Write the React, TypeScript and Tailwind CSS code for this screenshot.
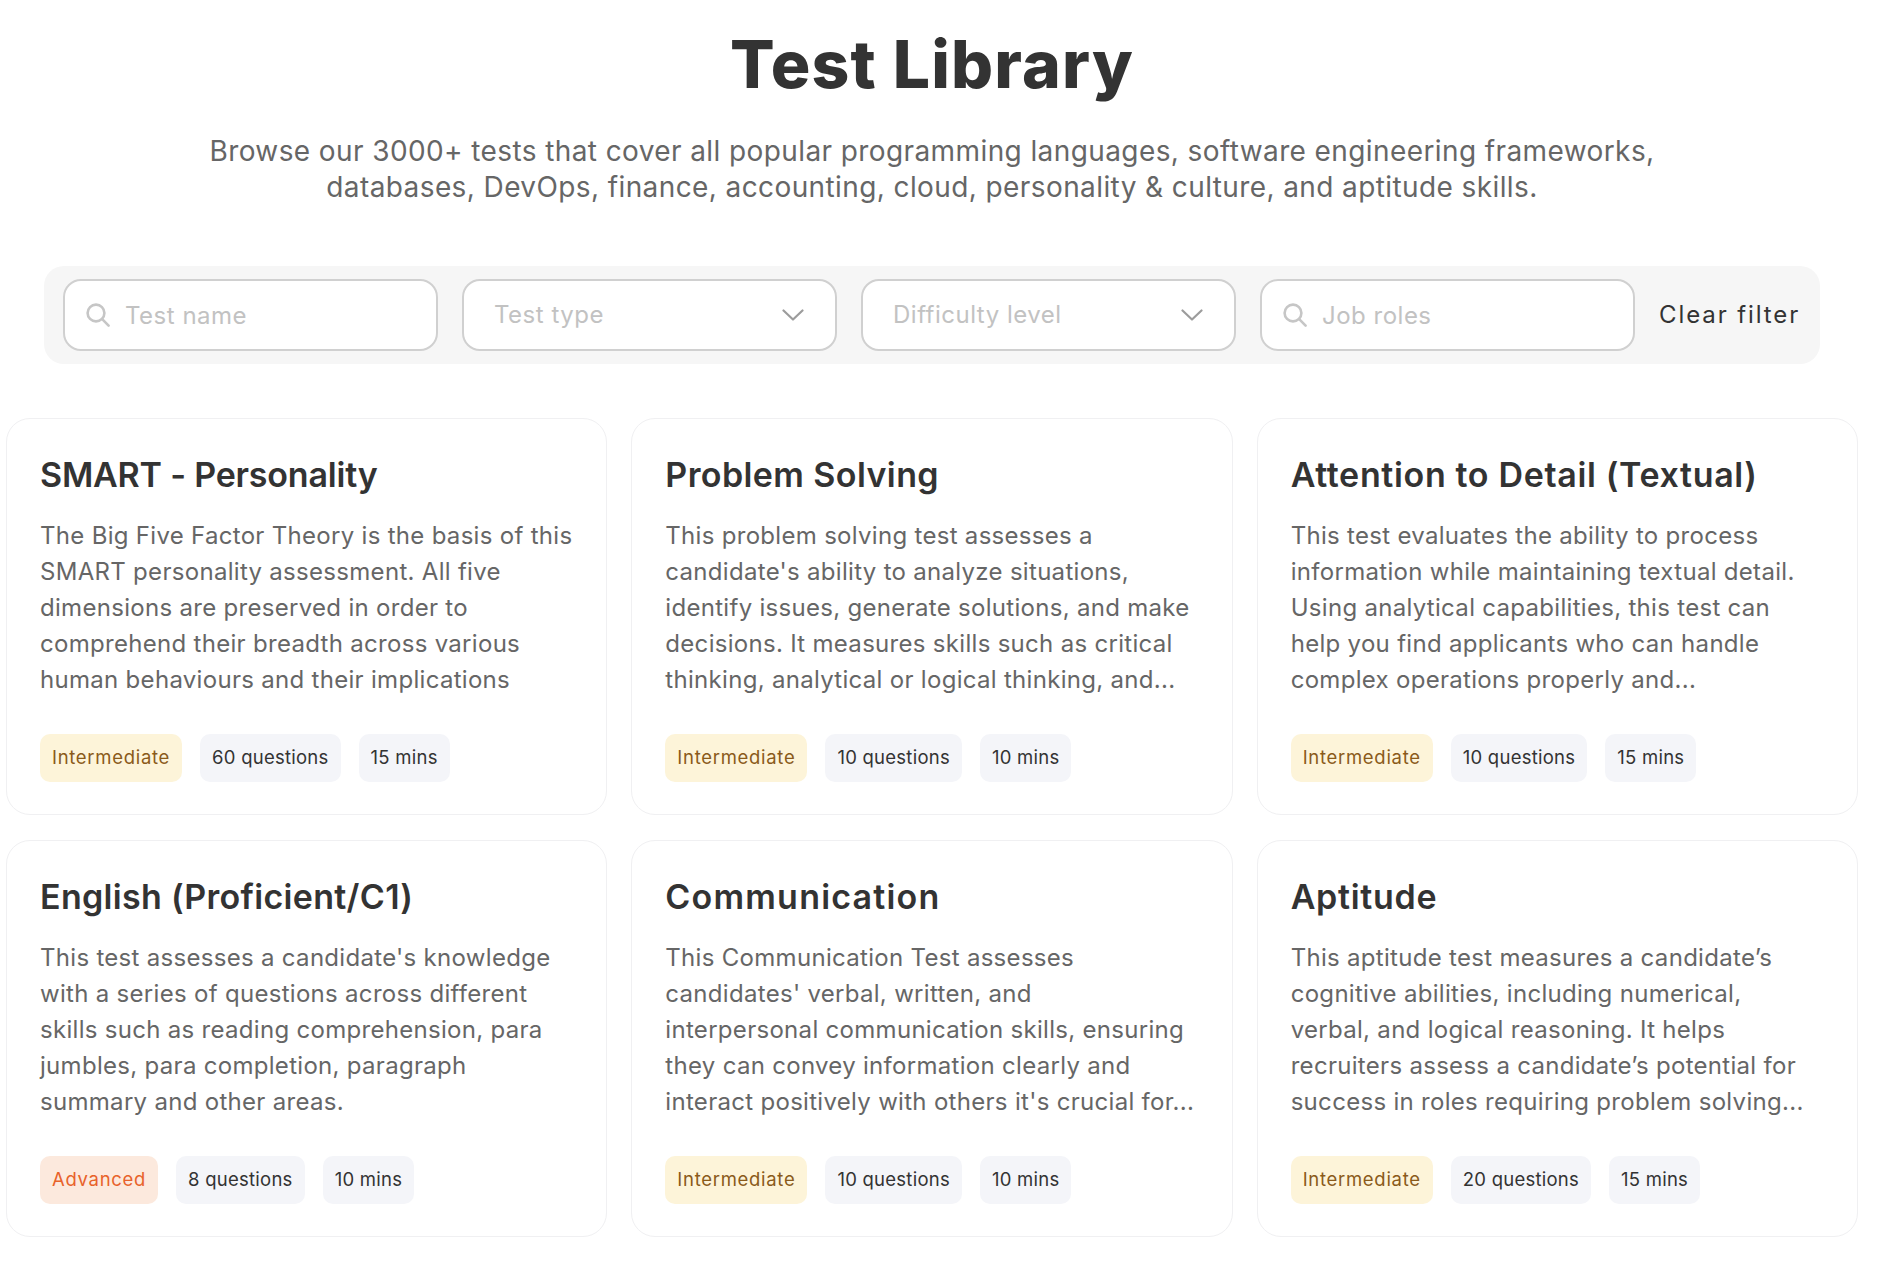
const cards = [
  { t: "SMART - Personality", tt: "tracking-[-0.2px]", d: ["The Big Five Factor Theory is the basis of this", "SMART personality assessment. All five", "dimensions are preserved in order to", "comprehend their breadth across various", "human behaviours and their implications"], l: "Intermediate", q: "60 questions", m: "15 mins" },
  { t: "Problem Solving", tt: "tracking-[0.4px]", d: ["This problem solving test assesses a", "candidate's ability to analyze situations,", "identify issues, generate solutions, and make", "decisions. It measures skills such as critical", "thinking, analytical or logical thinking, and..."], l: "Intermediate", q: "10 questions", m: "10 mins" },
  { t: "Attention to Detail (Textual)", tt: "tracking-[0.65px]", d: ["This test evaluates the ability to process", "information while maintaining textual detail.", "Using analytical capabilities, this test can", "help you find applicants who can handle", "complex operations properly and..."], l: "Intermediate", q: "10 questions", m: "15 mins" },
  { t: "English (Proficient/C1)", tt: "tracking-[0.3px]", d: ["This test assesses a candidate's knowledge", "with a series of questions across different", "skills such as reading comprehension, para", "jumbles, para completion, paragraph", "summary and other areas."], l: "Advanced", q: "8 questions", m: "10 mins" },
  { t: "Communication", tt: "tracking-[1.2px]", d: ["This Communication Test assesses", "candidates' verbal, written, and", "interpersonal communication skills, ensuring", "they can convey information clearly and", "interact positively with others it's crucial for..."], l: "Intermediate", q: "10 questions", m: "10 mins" },
  { t: "Aptitude", tt: "tracking-[0.7px]", d: ["This aptitude test measures a candidate’s", "cognitive abilities, including numerical,", "verbal, and logical reasoning. It helps", "recruiters assess a candidate’s potential for", "success in roles requiring problem solving..."], l: "Intermediate", q: "20 questions", m: "15 mins" },
];

function SearchIcon() {
  return (
    <svg width="24" height="24" viewBox="0 0 24 24" fill="none" stroke="#c6c6c6" strokeWidth="2.6" strokeLinecap="round" className="shrink-0">
      <circle cx="10" cy="10" r="8.4" />
      <path d="M16.2 16.2 22.6 22.6" />
    </svg>
  );
}

function Chevron() {
  return (
    <svg width="22" height="12" viewBox="0 0 22 12" fill="none" stroke="#9c9c9c" strokeWidth="2.2" strokeLinecap="round" strokeLinejoin="round" className="shrink-0">
      <path d="M1.5 1.5 11 10.5 20.5 1.5" />
    </svg>
  );
}

function Field({ label, kind }: { label: string; kind: "search" | "select" }) {
  return (
    <div className={`w-[375px] h-[72px] bg-white border-2 border-[#d0d0d0] rounded-[18px] flex items-center ${kind === "search" ? "pl-[21px] gap-[15px]" : "pl-[30px] pr-[31px] justify-between"}`}>
      {kind === "search" && <SearchIcon />}
      <span className={`text-[24px] text-[#c2c2c2] tracking-[0.5px] ${kind === "search" ? "pt-[2px]" : ""}`}>{label}</span>
      {kind === "select" && <Chevron />}
    </div>
  );
}

function Tag({ text, cls }: { text: string; cls: string }) {
  return <span className={`h-[48px] px-3 rounded-[10px] flex items-center text-[18.5px] ${cls}`}>{text}</span>;
}

export default function App() {
  return (
    <div className="w-[1864px] min-h-[1262px] bg-white text-[#333] font-['Inter',sans-serif] flex flex-col items-center">
      <h1 className="mt-[22px] text-[66px] leading-[84px] font-extrabold text-[#333] tracking-[1.2px]">Test Library</h1>
      <div className="mt-[27px] text-[28px] leading-[36px] text-[#666] text-center tracking-[0.4px]">
        <div>Browse our 3000+ tests that cover all popular programming languages, software engineering frameworks,</div>
        <div>databases, DevOps, finance, accounting, cloud, personality &amp; culture, and aptitude skills.</div>
      </div>
      <div className="mt-[61px] w-[1776px] h-[98px] bg-[#f6f6f6] rounded-[20px] flex items-center gap-[24px] pl-[19px]">
        <Field label="Test name" kind="search" />
        <Field label="Test type" kind="select" />
        <Field label="Difficulty level" kind="select" />
        <Field label="Job roles" kind="search" />
        <span className="text-[24px] text-[#333] tracking-[1.9px]">Clear filter</span>
      </div>
      <div className="mt-[54px] w-[1852px] grid grid-cols-3 gap-x-[24px] gap-y-[25px]">
        {cards.map((c) => (
          <div key={c.t} className="h-[397px] border border-[#f0f0f2] rounded-[24px] pl-[33px] pt-[34px]">
            <div className={`text-[34px] leading-[44px] font-semibold text-[#333] ${c.tt}`}>{c.t}</div>
            <div className="mt-[21px] text-[24px] leading-[36px] text-[#666] tracking-[0.3px] whitespace-nowrap">
              {c.d.map((l) => <div key={l}>{l}</div>)}
            </div>
            <div className="mt-[36px] flex gap-[18px]">
              <Tag text={c.l} cls={c.l === "Advanced" ? "bg-[#fce9dd] text-[#e8622a] tracking-[0.7px]" : "bg-[#fdf4d9] text-[#8a5a1a] tracking-[0.7px]"} />
              <Tag text={c.q} cls="bg-[#f4f5f9] text-[#333] tracking-[0.25px]" />
              <Tag text={c.m} cls="bg-[#f4f5f9] text-[#333] tracking-[0.25px]" />
            </div>
          </div>
        ))}
      </div>
    </div>
  );
}
